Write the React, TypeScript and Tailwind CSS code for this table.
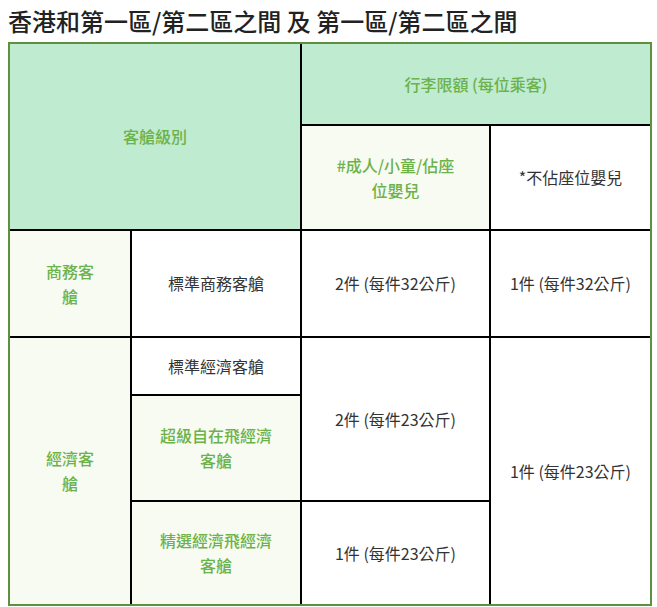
import React from "react";

const font = { fontFamily: '"Noto Sans CJK TC", "Noto Sans", sans-serif' };

function Cell({
  className,
  tone = "plain",
  children,
}: {
  className?: string;
  tone?: "head" | "soft" | "plain";
  children: React.ReactNode;
}) {
  const tones = {
    head: "bg-[#bfebd1] text-[#6cb24a] font-medium",
    soft: "bg-[#f7fbf2] text-[#6cb24a] font-medium",
    plain: "bg-white text-[#333333]",
  };
  return (
    <div
      className={`flex items-center justify-center text-center text-[16px] leading-[25px] ${tones[tone]} ${className ?? ""}`}
    >
      <div>{children}</div>
    </div>
  );
}

export default function App() {
  return (
    <div className="w-[657px] h-[607px] bg-white pt-[5px] px-2" style={font}>
      <h1 className="text-[24px] leading-[32px] font-medium text-[#222222] mb-[5px]">
        香港和第一區/第二區之間 及 第一區/第二區之間
      </h1>
      <div className="inline-grid grid-cols-[120px_168px_187px_159px] grid-rows-[80px_103px_105px_56px_104px_102px] gap-[2px] bg-black border-2 border-[#5d9140]">
        <Cell tone="head" className="col-span-2 row-span-2">
          客艙級別
        </Cell>
        <Cell tone="head" className="col-span-2">
          行李限額 (每位乘客)
        </Cell>
        <Cell tone="soft">
          #成人/小童/佔座
          <br />
          位嬰兒
        </Cell>
        <Cell>*不佔座位嬰兒</Cell>

        <Cell tone="soft">
          商務客
          <br />艙
        </Cell>
        <Cell>標準商務客艙</Cell>
        <Cell>2件 (每件32公斤)</Cell>
        <Cell>1件 (每件32公斤)</Cell>

        <Cell tone="soft" className="row-span-3">
          經濟客
          <br />艙
        </Cell>
        <Cell>標準經濟客艙</Cell>
        <Cell className="row-span-2">2件 (每件23公斤)</Cell>
        <Cell className="row-span-3">1件 (每件23公斤)</Cell>
        <Cell tone="soft">
          超級自在飛經濟
          <br />
          客艙
        </Cell>
        <Cell tone="soft">
          精選經濟飛經濟
          <br />
          客艙
        </Cell>
        <Cell>1件 (每件23公斤)</Cell>
      </div>
    </div>
  );
}
